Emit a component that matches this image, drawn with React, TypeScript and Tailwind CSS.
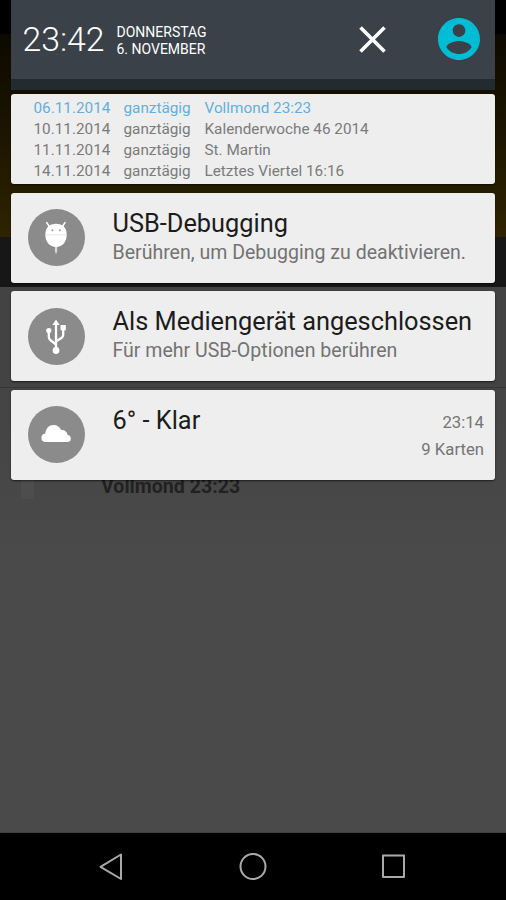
import type { ReactNode } from "react";

const EVENTS = [
  { date: "06.11.2014", time: "ganztägig", title: "Vollmond 23:23", today: true },
  { date: "10.11.2014", time: "ganztägig", title: "Kalenderwoche 46 2014" },
  { date: "11.11.2014", time: "ganztägig", title: "St. Martin" },
  { date: "14.11.2014", time: "ganztägig", title: "Letztes Viertel 16:16" },
];

function DebugIcon() {
  return (
    <svg width={57} height={57} viewBox="0 0 57 57" fill="#fff" aria-hidden>
      <path d="m18.700 13.600 3.200 4.600M37 13.600l-3.200 4.600" stroke="#fff" strokeWidth={1.6} strokeLinecap="round" />
      <path d="M17.300 25.500c0-6.800 4.300-10.700 10.700-10.700s10.700 3.900 10.700 10.700c0 7.600-4.300 12.500-10.700 12.500s-10.700-4.900-10.700-12.500Z" />
      <path d="M26.900 38h2.300v4l-.7 2.600h-.9l-.7-2.600Z" fill="#d8d8d8" />
      <path d="M17.500 25.800h21" stroke="#ddd" strokeWidth={0.7} />
      <circle cx={24.3} cy={21.2} r={1} fill="#999" />
      <circle cx={31.8} cy={21.2} r={1} fill="#999" />
    </svg>
  );
}

function UsbIcon() {
  return (
    <svg width={57} height={57} viewBox="0 0 57 57" fill="#fff" aria-hidden>
      <path d="M28 15v27M28 36.500l-5.700-4.500q-1.500-1.200-1.500-3V23M28 33.500l5.700-3.800q1.500-1 1.500-3V20" fill="none" stroke="#fff" strokeWidth={2.3} />
      <path d="m28 11.500 3.600 5.500h-7.200Z" />
      <circle cx={20.8} cy={22.5} r={2.6} />
      <path d="M32.500 17h5.300v5.300h-5.300Z" />
      <circle cx={28} cy={42.5} r={3.4} />
    </svg>
  );
}

function CloudIcon() {
  return (
    <svg width={57} height={57} viewBox="0 0 57 57" fill="#fff" aria-hidden>
      <path d="M17 36a4.300 4.300 0 0 1 .2-8.500c.8-5.100 3.800-8.500 8.400-8.500 3.700 0 6.200 2 7.700 5 3.400-.3 5.900 1.800 6.400 5.100A3.500 3.500 0 0 1 40 36Z" />
    </svg>
  );
}

function Notification({ icon, title, text, children }: { icon: ReactNode; title: string; text?: string; children?: ReactNode }) {
  return (
    <article className="flex h-[90px] rounded-[3px] bg-[#eee] pl-[17px] pr-[11px] shadow-[0_1px_2px_rgba(0,0,0,0.6)]">
      <div className="mt-[16.500px] size-[57px] shrink-0 rounded-full bg-[#8b8b8b]">{icon}</div>
      <div className="ml-[27.500px] flex-1 whitespace-nowrap pt-[14px]">
        <h2 className="text-[25.350px] leading-[32px] text-[#1c1c1c]">{title}</h2>
        {text && <p className="text-[19.550px] leading-[28px] text-[#737373]">{text}</p>}
      </div>
      {children}
    </article>
  );
}

export default function App() {
  return (
    <div className="relative flex h-[900px] w-[506px] flex-col overflow-hidden bg-black font-['Roboto',sans-serif]">
      {/* App hinter der Leiste */}
      <div className="h-[34px] bg-black" />
      <div className="h-[203px] bg-linear-to-b from-[#0c0900] to-[#2f2300]" />
      <div className="h-[50px] bg-[#171717]" />
      <div className="h-[101px] border-b border-[#363636] bg-[#434343]" />
      <div className="flex h-[445px] items-start border-b border-[#3d3d3d] bg-linear-to-b from-[#444] to-[#4a4a4a] to-40%">
        <div className="ml-[21px] mt-[91px] h-[20px] w-[13px] bg-[#4d4d4d]" />
        <p className="ml-[67px] mt-[87px] text-[19.600px] font-bold leading-[24px] text-[#212121]">Vollmond 23:23</p>
      </div>

      {/* Navigationsleiste */}
      <nav className="flex h-[67px] items-center bg-black" aria-label="Systemnavigation">
        <svg width={506} height={67} fill="none" stroke="#a9a9a9" strokeWidth={2} strokeLinejoin="round" aria-hidden>
          <path d="M121 21.500v24.500l-20.500-12.200Z" />
          <circle cx={253} cy={33.5} r={12.5} />
          <path d="M383 22.500h21v21.500h-21Z" />
        </svg>
      </nav>

      {/* Benachrichtigungen */}
      <main className="absolute left-[11px] top-0 w-[484px]">
        <header className="flex h-[90px] items-start border-b-[11px] border-[#222b2f] bg-[#3a4149] text-white">
          <time className="ml-[11.500px] mt-[20px] w-[94px] text-[33.800px] font-light leading-[40px]">23:42</time>
          <p className="mt-[24px] whitespace-nowrap text-[14px] leading-[17px]">
            DONNERSTAG
            <br />
            6. NOVEMBER
          </p>
          <svg className="ml-auto mr-[52px] mt-[26px]" width={27} height={27} stroke="#fff" strokeWidth={3.6} aria-label="Schließen">
            <path d="m1.500 1.500 24 24M25.500 1.500l-24 24" />
          </svg>
          <svg className="mr-[15px] mt-[18px]" width={42} height={42} viewBox="2 2 20 20" fill="#00bcd4" aria-label="Benutzer">
            <path d="M12 2C6.480 2 2 6.480 2 12s4.480 10 10 10 10-4.480 10-10S17.520 2 12 2zm0 3c1.660 0 3 1.340 3 3s-1.340 3-3 3-3-1.340-3-3 1.340-3 3-3zm0 14.200c-2.500 0-4.710-1.280-6-3.220.03-1.990 4-3.080 6-3.080 1.990 0 5.970 1.090 6 3.080-1.290 1.940-3.500 3.220-6 3.220z" />
          </svg>
        </header>

        <div className="mt-[4px] flex flex-col gap-[8.500px]">
          <section className="h-[90px] rounded-[3px] bg-[#eee] pl-[22.500px] pt-[3px] shadow-[0_1px_2px_rgba(0,0,0,0.6)]">
            {EVENTS.map((e) => (
              <div
                key={e.date}
                className={`flex h-[21px] text-[15.300px] leading-[22px] whitespace-nowrap ${e.today ? "text-[#62aee0]" : "text-[#7b7b7b]"}`}
              >
                <span className="w-[90px]">{e.date}</span>
                <span className="w-[81px]">{e.time}</span>
                <span>{e.title}</span>
              </div>
            ))}
          </section>

          <Notification icon={<DebugIcon />} title="USB-Debugging" text="Berühren, um Debugging zu deaktivieren." />
          <Notification icon={<UsbIcon />} title="Als Mediengerät angeschlossen" text="Für mehr USB-Optionen berühren" />
          <Notification icon={<CloudIcon />} title="6° - Klar">
            <div className="pt-[19px] text-right text-[16.700px] leading-[27px] text-[#757575]">
              <p>23:14</p>
              <p>9 Karten</p>
            </div>
          </Notification>
        </div>
      </main>
    </div>
  );
}
